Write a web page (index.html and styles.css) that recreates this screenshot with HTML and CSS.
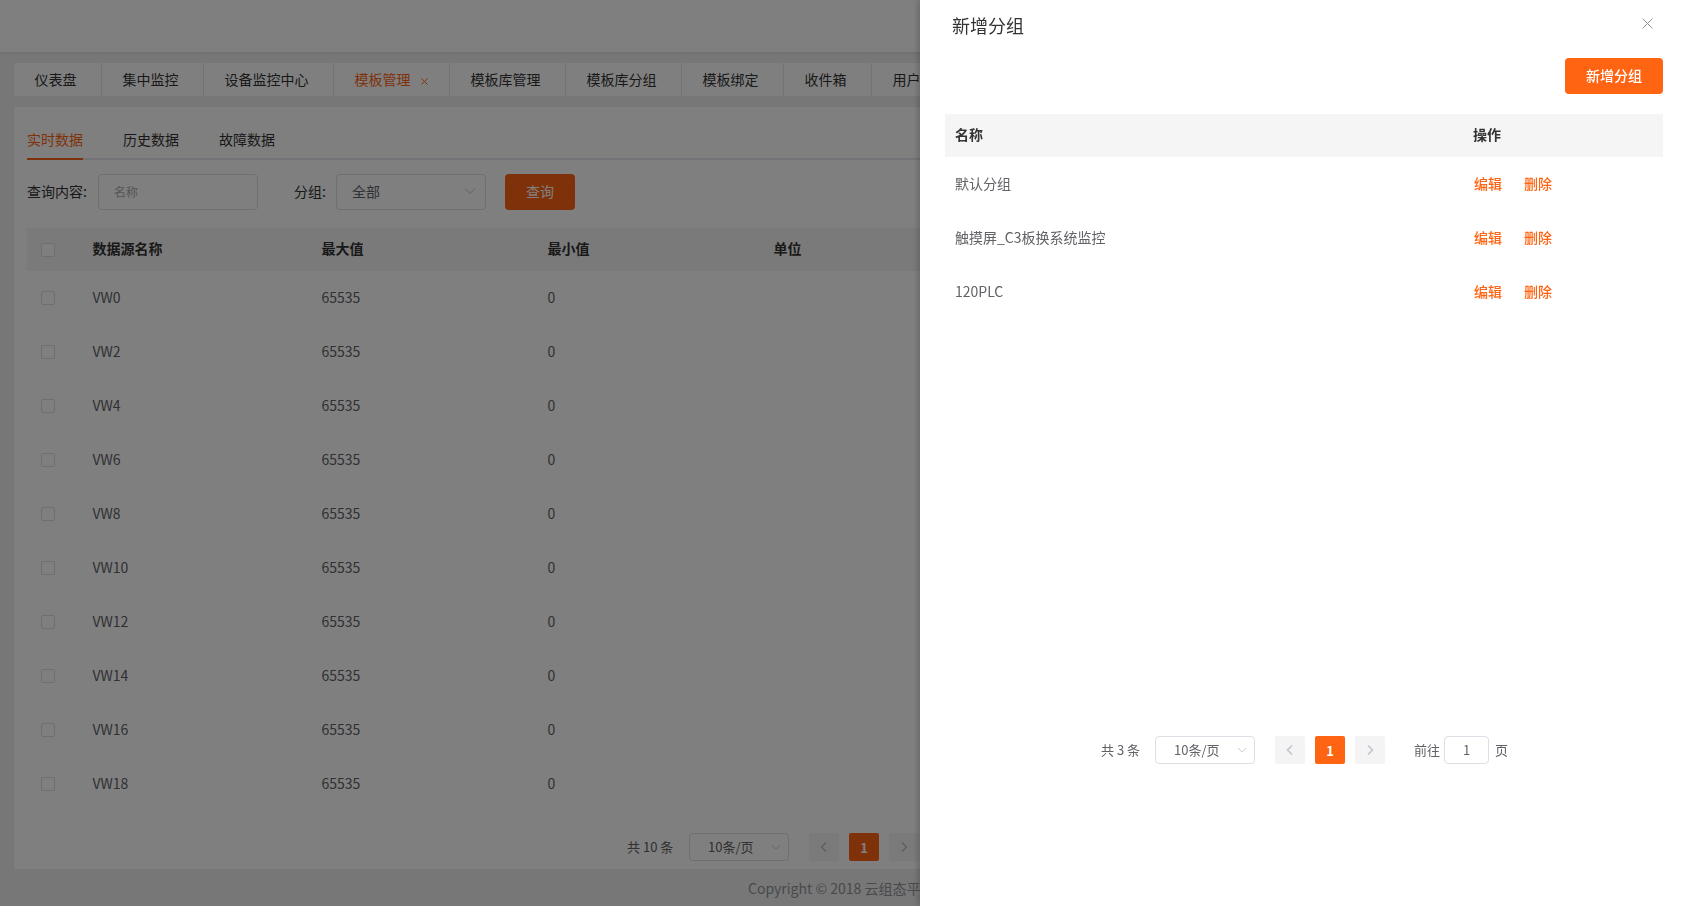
FILE: index.html
```html
<!DOCTYPE html>
<html lang="zh-CN">
<head>
<meta charset="utf-8">
<title>新增分组</title>
<link rel="stylesheet" href="styles.css">
</head>
<body>
<div class="page">
  <header class="topbar"></header>
  <nav class="page-tabs">
    <a class="page-tab">仪表盘</a>
    <a class="page-tab">集中监控</a>
    <a class="page-tab">设备监控中心</a>
    <a class="page-tab active">模板管理<svg class="tab-x" viewBox="0 0 7 7"><path d="M.5 .5 6.5 6.5M6.5 .5 .5 6.5"/></svg></a>
    <a class="page-tab">模板库管理</a>
    <a class="page-tab">模板库分组</a>
    <a class="page-tab">模板绑定</a>
    <a class="page-tab">收件箱</a>
    <a class="page-tab">用户管理</a>
  </nav>
  <main class="card">
    <div class="sub-tabs">
      <a class="sub-tab active">实时数据</a>
      <a class="sub-tab">历史数据</a>
      <a class="sub-tab">故障数据</a>
    </div>
    <div class="filter">
      <label class="filter-label">查询内容:</label>
      <div class="field name-field">名称</div>
      <label class="filter-label group-label">分组:</label>
      <div class="field group-field"><span>全部</span>
        <svg class="chev" viewBox="0 0 12 12"><path d="M1 3.5 6 8.5 11 3.5"/></svg>
      </div>
      <button class="btn query">查询</button>
    </div>
    <table class="grid data-grid">
      <colgroup><col class="c-check"><col class="c-name"><col class="c-val"><col class="c-val"><col class="c-val"><col></colgroup>
      <thead><tr><th><i class="check"></i></th><th>数据源名称</th><th>最大值</th><th>最小值</th><th>单位</th><th></th></tr></thead>
      <tbody>
        <tr><td><i class="check"></i></td><td>VW0</td><td>65535</td><td>0</td><td></td><td></td></tr>
        <tr><td><i class="check"></i></td><td>VW2</td><td>65535</td><td>0</td><td></td><td></td></tr>
        <tr><td><i class="check"></i></td><td>VW4</td><td>65535</td><td>0</td><td></td><td></td></tr>
        <tr><td><i class="check"></i></td><td>VW6</td><td>65535</td><td>0</td><td></td><td></td></tr>
        <tr><td><i class="check"></i></td><td>VW8</td><td>65535</td><td>0</td><td></td><td></td></tr>
        <tr><td><i class="check"></i></td><td>VW10</td><td>65535</td><td>0</td><td></td><td></td></tr>
        <tr><td><i class="check"></i></td><td>VW12</td><td>65535</td><td>0</td><td></td><td></td></tr>
        <tr><td><i class="check"></i></td><td>VW14</td><td>65535</td><td>0</td><td></td><td></td></tr>
        <tr><td><i class="check"></i></td><td>VW16</td><td>65535</td><td>0</td><td></td><td></td></tr>
        <tr><td><i class="check"></i></td><td>VW18</td><td>65535</td><td>0</td><td></td><td></td></tr>
      </tbody>
    </table>
    <div class="pager main-pager">
      <span class="total">共 10 条</span>
      <div class="field size-field"><span>10条/页</span><svg class="chev small" viewBox="0 0 12 12"><path d="M1 3.5 6 8.5 11 3.5"/></svg></div>
      <span class="page-btn"><svg viewBox="0 0 12 12"><path d="M8 1.5 3.5 6 8 10.5"/></svg></span>
      <span class="page-btn current">1</span>
      <span class="page-btn"><svg viewBox="0 0 12 12"><path d="M4 1.5 8.5 6 4 10.5"/></svg></span>
    </div>
  </main>
  <footer class="copyright">Copyright © 2018 云组态平台</footer>
</div>

<div class="overlay"></div>

<aside class="drawer">
  <div class="drawer-head">
    <h2 class="drawer-title">新增分组</h2>
    <svg class="close" viewBox="0 0 11 11"><path d="M.5 .5 10.5 10.5M10.5 .5 .5 10.5"/></svg>
  </div>
  <div class="drawer-actions"><button class="btn add">新增分组</button></div>
  <table class="grid group-grid">
    <colgroup><col class="c-gname"><col></colgroup>
    <thead><tr><th>名称</th><th>操作</th></tr></thead>
    <tbody>
      <tr><td>默认分组</td><td><a class="op">编辑</a><a class="op">删除</a></td></tr>
      <tr><td>触摸屏_C3板换系统监控</td><td><a class="op">编辑</a><a class="op">删除</a></td></tr>
      <tr><td>120PLC</td><td><a class="op">编辑</a><a class="op">删除</a></td></tr>
    </tbody>
  </table>
  <div class="pager drawer-pager">
    <span class="total">共 3 条</span>
    <div class="field size-field"><span>10条/页</span><svg class="chev small" viewBox="0 0 12 12"><path d="M1 3.5 6 8.5 11 3.5"/></svg></div>
    <span class="page-btn"><svg viewBox="0 0 12 12"><path d="M8 1.5 3.5 6 8 10.5"/></svg></span>
    <span class="page-btn current">1</span>
    <span class="page-btn"><svg viewBox="0 0 12 12"><path d="M4 1.5 8.5 6 4 10.5"/></svg></span>
    <span class="goto">前往</span>
    <div class="field goto-field">1</div>
    <span class="goto-unit">页</span>
  </div>
</aside>
</body>
</html>
```

FILE: styles.css
```css
* { box-sizing: border-box; }
html, body { margin: 0; height: 100%; overflow: hidden; }
body {
  font-family: "Noto Sans CJK SC", "Noto Sans", sans-serif;
  font-size: 14px;
  color: #606266;
  background: #eeeeee;
}
.page { height: 906px; display: flex; flex-direction: column; overflow: hidden; }
.topbar { height: 52px; flex: none; background: #fff; box-shadow: 0 1px 4px rgba(0, 0, 0, .08); }

.page-tabs {
  flex: none;
  display: flex;
  height: 33px;
  margin: 10.5px 14px 11.5px;
  background: #fff;
  border-radius: 3px;
  overflow: hidden;
}
.page-tab {
  flex: none;
  line-height: 33px;
  padding: 0 24.5px 0 20.5px;
  border-right: 1px solid #e6e6e6;
  color: #333;
  white-space: nowrap;
}
.page-tab.active { color: #ff6412; padding-right: 21.5px; }
.tab-x { width: 7px; height: 7px; margin-left: 10px; fill: none; stroke: #ff6412; stroke-width: 1; }

.card { flex: none; height: 762px; margin: 0 14px; padding: 20px 13px 0; background: #fff; border-radius: 3px; }
.sub-tabs { display: flex; gap: 40px; height: 33px; border-bottom: 2px solid #e4e7ed; }
.sub-tab { height: 33px; line-height: 24px; color: #333; }
.sub-tab.active { color: #ff6412; border-bottom: 2px solid #ff6412; }

.filter { display: flex; align-items: center; margin-top: 14px; height: 36px; }
.filter-label { color: #333; width: 71px; flex: none; padding-bottom: 2px; }
.group-label { width: 42px; margin-left: 36px; }
.field {
  display: flex;
  align-items: center;
  border: 1px solid #dcdfe6;
  border-radius: 4px;
  background: #fff;
  color: #606266;
}
.name-field { width: 160px; height: 36px; padding: 0 0 2px 15px; color: #a8abb2; font-size: 12px; }
.group-field { width: 150px; height: 36px; padding: 0 9px 2px 15px; justify-content: space-between; font-size: 14px; }
.chev { width: 12px; height: 12px; fill: none; stroke: #c0c4cc; stroke-width: 1; }
.chev.small { width: 10px; height: 10px; }
.btn {
  font: inherit;
  border: 0;
  border-radius: 4px;
  background: #ff6412;
  color: #fff;
  cursor: pointer;
  padding: 0 0 2px;
}
.query { width: 70px; height: 36px; margin-left: 19px; }

.grid { border-collapse: collapse; table-layout: fixed; }
.grid th { height: 43px; padding: 0 0 4px 10px; background: #f5f5f5; color: #333; font-weight: 700; font-size: 14px; text-align: left; }
.grid td { height: 54px; padding: 0 0 2px 10px; color: #606266; }
.grid th:first-child .check { margin-bottom: -4px; }
.grid td:first-child .check { margin-bottom: -2px; }
.data-grid { width: 1632px; margin-top: 18px; }
.c-check { width: 55.5px; }
.c-name { width: 229px; }
.c-val { width: 226px; }
.check {
  display: block;
  width: 14px;
  height: 14px;
  margin-left: 4px;
  border: 1px solid #dcdfe6;
  border-radius: 2px;
  background: #fff;
}

.pager { display: flex; align-items: center; font-size: 13px; color: #606266; }
.main-pager { margin-top: 22px; padding-left: 600px; height: 28px; }
.total { flex: none; padding-bottom: 2px; }
.main-pager .total { width: 62px; }
.size-field { width: 100px; height: 28px; margin-right: 20px; padding: 0 7px 1px 18px; justify-content: space-between; }
.page-btn {
  flex: none;
  width: 30px;
  height: 28px;
  margin-right: 10px;
  display: flex;
  align-items: center;
  justify-content: center;
  border-radius: 2px;
  background: #f4f4f5;
}
.page-btn svg { width: 12px; height: 12px; fill: none; stroke: #c0c4cc; stroke-width: 1.6; }
.page-btn.current { background: #ff6412; color: #fff; font-weight: 700; }

.copyright { flex: none; height: 37px; line-height: 38px; padding-left: 748px; color: #909399; white-space: nowrap; }

.overlay { position: fixed; inset: 0; background: rgba(0, 0, 0, .5); }

.drawer {
  position: fixed;
  top: 0;
  right: 0;
  bottom: 0;
  width: 766px;
  background: #fff;
  box-shadow: -2px 0 6px rgba(0, 0, 0, .2);
}
.drawer-head { display: flex; justify-content: space-between; align-items: center; height: 52px; padding: 0 33px 2px 32px; }
.drawer-title { margin: 0; font-size: 18px; font-weight: 400; color: #333; }
.close { width: 11px; height: 11px; margin-top: -4px; fill: none; stroke: #909399; stroke-width: 1; }
.drawer-actions { display: flex; justify-content: flex-end; height: 36px; margin: 6px 23px 20px 0; }
.add { width: 98px; height: 36px; font-weight: 500; font-size: 14px; }
.group-grid { width: 718px; margin-left: 25px; }
.c-gname { width: 518px; }
.op { color: #ff6412; margin: 0 21px 0 1px; font-size: 14px; font-weight: 500; }
.drawer-pager { position: absolute; left: 181px; top: 736px; height: 28px; }
.drawer-pager .total { width: 54px; }
.goto { margin-left: 19px; width: 30px; padding-bottom: 2px; }
.goto-field { width: 45px; height: 28px; justify-content: center; padding-bottom: 1px; }
.goto-unit { margin-left: 6px; padding-bottom: 2px; }
```
